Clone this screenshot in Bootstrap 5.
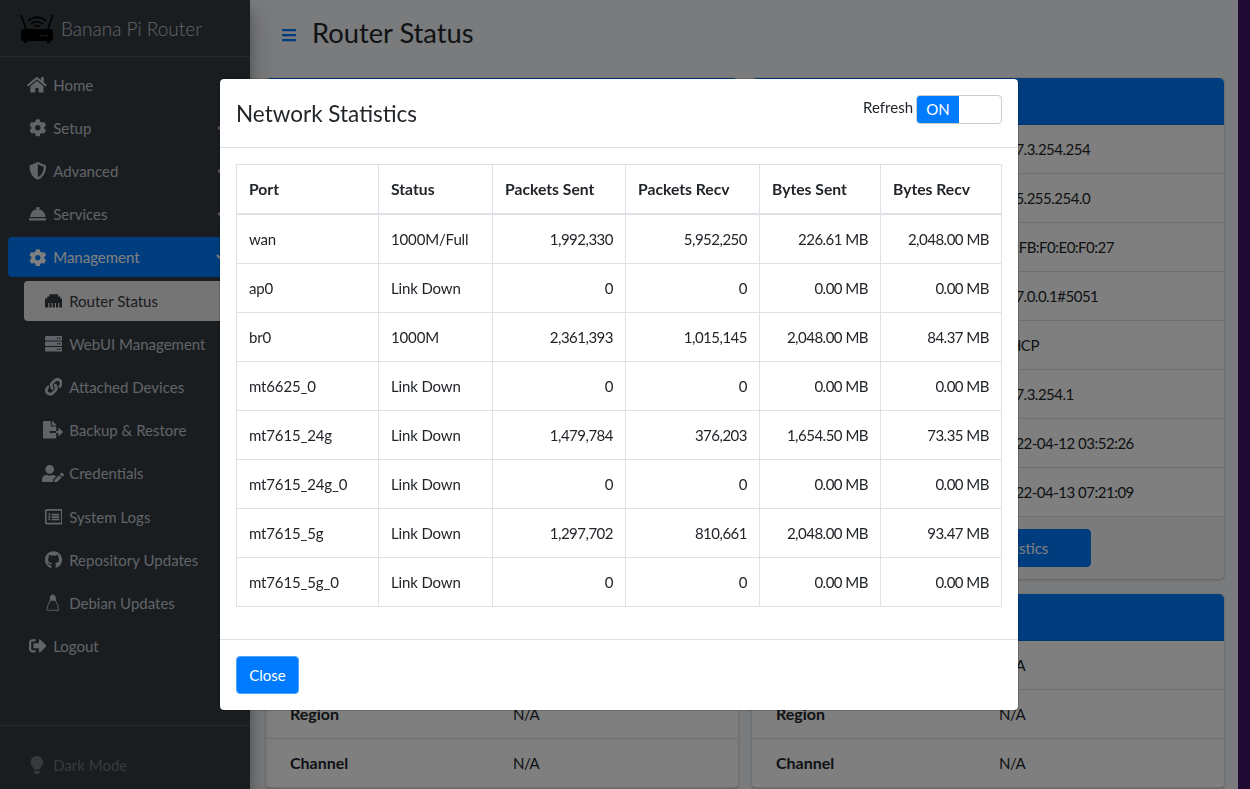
<!DOCTYPE html>
<html lang="en">
<head>
  <meta charset="UTF-8">
  <title>Router Status</title>
  <link href="https://cdn.jsdelivr.net/npm/bootstrap@5.3.3/dist/css/bootstrap.min.css" rel="stylesheet">
  <style>
    html, body { height: 100%; overflow: hidden; }
    body { background: #1f0a33; font-family: "Lato", "Liberation Sans", sans-serif; font-size: 15px; line-height: 24px; color: #212529; }
    .page-wrap { width: 1238px; height: 789px; background: #f4f6f9; overflow: hidden; }
    .modal-backdrop, .modal { width: 1238px; }
    .side-bar { width: 250px; flex: none; background: #343a40; color: #c2c7d0; height: 789px;
      box-shadow: 0 14px 28px rgba(0,0,0,.25), 0 10px 10px rgba(0,0,0,.22); position: relative; z-index: 2; }
    .brand-row { height: 57px; border-bottom: 1px solid #4b545c; padding-left: 20px; }
    .brand-row span { font-size: 19px; font-weight: 300; margin-left: 7px; padding-top: 2px; }
    .side-nav { padding: 7.7px 8px 0; }
    .side-link { display: flex; align-items: center; height: 40px; margin-bottom: 3.2px; padding: 0 16px; border-radius: 4px;
      color: #c2c7d0; text-decoration: none; }
    .side-link .ico { width: 25.6px; margin-right: 3.6px; padding-left: 1px; flex: none; display: flex; justify-content: center; }
    .side-link .ico svg { height: 17.6px; fill: currentColor; }
    .side-link .chev { margin-left: auto; height: 10px; fill: none; stroke: currentColor; stroke-width: 2; }
    .side-link.is-open { background: #007bff; color: #fff; }
    .side-link.is-sub { margin-left: 16px; }
    .side-link.is-current { background: rgba(255,255,255,.9); color: #343a40; }
    .dark-row { position: absolute; left: 0; right: 0; top: 725px; border-top: 1px solid #4b545c; padding: 27px 24px; color: #6c757d; }
    .dark-row svg { height: 18px; width: 25.6px; fill: currentColor; margin-right: 3.6px; }
    .main-area { flex: 1; min-width: 0; }
    .top-head { height: 78px; padding: 14px 0 0 32px; }
    .top-head svg { width: 14px; height: 16px; fill: #007bff; margin: 13px 16px 0 0; }
    .top-head h1 { font-size: 27.3px; font-weight: 400; margin: 0; line-height: 38px; }
    .cards-grid { display: grid; grid-template-columns: 472px 472px; column-gap: 14px; row-gap: 15px; padding-left: 16px; }
    .stat-card { border: 0; border-radius: 4px; box-shadow: 0 0 1px rgba(0,0,0,.25), 0 1px 3px rgba(0,0,0,.2); }
    .stat-card .card-header { height: 47px; background: #007bff; color: #fff; border: 0; border-bottom: 1px solid rgba(0,0,0,.125); padding: 10px 24px; }
    .info-row { display: grid; grid-template-columns: 223px 1fr; height: 49px; padding: 12px 24px; line-height: 24px; border-bottom: 1px solid rgba(0,0,0,.125); }
    .info-row b { font-weight: 700; font-size: 16px; }
    .info-row span { letter-spacing: -.5px; }
    .stat-foot { height: 62px; padding: 12px 0; text-align: center; background: rgba(0,0,0,.03); }
    .stat-foot .btn { width: 205px; font-size: 15px; line-height: 24px; background: #007bff; border-color: #007bff; border-radius: 4px; }
    .modal-dialog { margin-top: 78px; }
    .modal-content { border-radius: 5px; }
    .modal-header { padding: 16px; height: 69px; align-items: flex-start; }
    .modal-title { font-size: 22.5px; line-height: 36px; font-weight: 400; margin-top: 1px; }
    .refresh-toggle { width: 86px; height: 29px; border: 1px solid #ccc; border-radius: 4px; overflow: hidden; margin-left: 3px; }
    .refresh-toggle span { display: block; width: 42px; height: 100%; background: #007bff; color: #fff; text-align: center; line-height: 27px; }
    .modal-footer { justify-content: flex-start; padding: 16px; height: 71px; }
    .modal-footer .btn { margin: 0; width: 63px; padding-left: 0; padding-right: 0; font-size: 15px; line-height: 24px; background: #007bff; border-color: #4da3ff; border-radius: 4px; }
    .net-table { table-layout: fixed; width: 766px; margin-bottom: 16px; color: #212529; font-size: 15px; }
    .net-table th, .net-table td { padding: 12px; line-height: 24px; font-weight: 400; vertical-align: top; }
    .net-table th { font-weight: 700; font-size: 15.7px; border-bottom-width: 2px; }
    .net-table td { letter-spacing: -.15px; }
    .net-table td.text-end { letter-spacing: -.5px; }
    .net-table th:nth-child(1) { width: 142px; }
    .net-table th:nth-child(2) { width: 114px; }
    .net-table th:nth-child(3) { width: 133px; }
    .net-table th:nth-child(4) { width: 134px; }
    .net-table th:nth-child(5) { width: 121px; }
  </style>
</head>
<body>
  <div class="page-wrap d-flex">
    <aside class="side-bar">
      <div class="brand-row d-flex align-items-center">
        <svg width="34" height="32" viewBox="0 0 34 32">
          <path d="M1 3l5 14M33 3l-5 14" stroke="#000" stroke-width="1.6" fill="none"/>
          <path d="M8 9a13 13 0 0 1 18 0M11 12a9 9 0 0 1 12 0M14 15a4.500 4.500 0 0 1 6 0" stroke="#000" stroke-width="1.6" fill="none"/>
          <rect x="1" y="17" width="32" height="12" rx="2.500" fill="#000"/>
          <path d="M4 29h3v2H4zM27 29h3v2h-3z" fill="#000"/>
          <path d="M20 23h1.500v1.500H20zM23 23h1.500v1.500H23zM26 23h1.500v1.500H26z" fill="#444"/>
        </svg>
        <span>Banana Pi Router</span>
      </div>
      <nav class="side-nav">
        <a class="side-link" href="#"><span class="ico"><svg viewBox="0 0 576 512"><path d="M280.37 148.26L96 300.11V464a16 16 0 0 0 16 16l112.06-.29a16 16 0 0 0 15.92-16V368a16 16 0 0 1 16-16h64a16 16 0 0 1 16 16v95.64a16 16 0 0 0 16 16.05L464 480a16 16 0 0 0 16-16V300L295.67 148.26a12.19 12.19 0 0 0-15.3 0zM571.6 251.47L488 182.56V44.05a12 12 0 0 0-12-12h-56a12 12 0 0 0-12 12v72.61L318.47 43a48 48 0 0 0-61 0L4.34 251.47a12 12 0 0 0-1.6 16.9l25.5 31A12 12 0 0 0 45.15 301l235.22-193.74a12.19 12.19 0 0 1 15.3 0L530.9 301a12 12 0 0 0 16.9-1.6l25.5-31a12 12 0 0 0-1.7-16.93z"/></svg></span>Home</a>
        <a class="side-link" href="#"><span class="ico"><svg viewBox="0 0 512 512"><path d="M487.4 315.7l-42.6-24.6c4.3-23.2 4.3-47 0-70.2l42.6-24.6c4.9-2.8 7.1-8.6 5.5-14-11.1-35.6-30-67.8-54.7-94.6-3.8-4.1-10-5.1-14.8-2.3L380.8 110c-17.9-15.4-38.5-27.3-60.8-35.1V25.8c0-5.6-3.9-10.5-9.4-11.7-36.7-8.2-74.3-7.8-109.2 0-5.5 1.2-9.4 6.1-9.4 11.7V75c-22.2 7.9-42.8 19.8-60.8 35.1L88.7 85.5c-4.9-2.8-11-1.9-14.8 2.3-24.7 26.7-43.6 58.9-54.7 94.6-1.7 5.4.6 11.2 5.5 14L67.3 221c-4.3 23.2-4.3 47 0 70.2l-42.6 24.6c-4.9 2.8-7.1 8.6-5.5 14 11.1 35.6 30 67.8 54.7 94.6 3.8 4.1 10 5.1 14.8 2.3l42.6-24.6c17.9 15.4 38.5 27.3 60.8 35.1v49.2c0 5.6 3.9 10.5 9.4 11.7 36.7 8.2 74.3 7.8 109.2 0 5.5-1.2 9.4-6.1 9.4-11.7v-49.2c22.2-7.9 42.8-19.8 60.8-35.1l42.6 24.6c4.9 2.8 11 1.9 14.8-2.3 24.7-26.7 43.6-58.9 54.7-94.6 1.5-5.5-.7-11.3-5.6-14.1zM256 336c-44.1 0-80-35.9-80-80s35.9-80 80-80 80 35.9 80 80-35.9 80-80 80z"/></svg></span>Setup<svg class="chev" viewBox="0 0 10 10"><path d="M7 1L3 5l4 4"/></svg></a>
        <a class="side-link" href="#"><span class="ico"><svg viewBox="0 0 512 512"><path d="M466.5 83.7l-192-80a48.15 48.15 0 0 0-36.9 0l-192 80C27.7 91.1 16 108.6 16 128c0 198.5 114.500 335.700 221.500 380.300 11.800 4.900 25.100 4.900 36.900 0C360.100 472.600 496 349.300 496 128c0-19.400-11.700-36.900-29.500-44.300zM256.100 446.300l-.1-381 175.900 73.300c-3.300 151.400-82.100 261.100-175.800 307.700z"/></svg></span>Advanced<svg class="chev" viewBox="0 0 10 10"><path d="M7 1L3 5l4 4"/></svg></a>
        <a class="side-link" href="#"><span class="ico"><svg viewBox="0 0 512 512"><path d="M288 130.54V112h16c8.84 0 16-7.160 16-16V80c0-8.840-7.160-16-16-16h-96c-8.840 0-16 7.160-16 16v16c0 8.840 7.160 16 16 16h16v18.540C115.490 146.110 32 239.180 32 352h448c0-112.820-83.490-205.890-192-221.460zM496 384H16c-8.840 0-16 7.160-16 16v32c0 8.840 7.160 16 16 16h480c8.840 0 16-7.160 16-16v-32c0-8.840-7.160-16-16-16z"/></svg></span>Services<svg class="chev" viewBox="0 0 10 10"><path d="M7 1L3 5l4 4"/></svg></a>
        <a class="side-link is-open" href="#"><span class="ico"><svg viewBox="0 0 512 512"><path d="M487.4 315.7l-42.6-24.6c4.3-23.2 4.3-47 0-70.2l42.6-24.6c4.9-2.8 7.1-8.6 5.5-14-11.1-35.6-30-67.8-54.7-94.6-3.8-4.1-10-5.1-14.8-2.3L380.8 110c-17.9-15.4-38.5-27.3-60.8-35.1V25.8c0-5.6-3.9-10.5-9.4-11.7-36.7-8.2-74.3-7.8-109.2 0-5.5 1.2-9.4 6.1-9.4 11.7V75c-22.2 7.9-42.8 19.8-60.8 35.1L88.7 85.5c-4.9-2.8-11-1.9-14.8 2.3-24.7 26.7-43.6 58.9-54.7 94.6-1.7 5.4.6 11.2 5.5 14L67.3 221c-4.3 23.2-4.3 47 0 70.2l-42.6 24.6c-4.9 2.8-7.1 8.6-5.5 14 11.1 35.6 30 67.8 54.7 94.6 3.8 4.1 10 5.1 14.8 2.3l42.6-24.6c17.9 15.4 38.5 27.3 60.8 35.1v49.2c0 5.6 3.9 10.5 9.4 11.7 36.7 8.2 74.3 7.8 109.2 0 5.5-1.2 9.4-6.1 9.4-11.7v-49.2c22.2-7.9 42.8-19.8 60.8-35.1l42.6 24.6c4.9 2.8 11 1.9 14.8-2.3 24.7-26.7 43.6-58.9 54.7-94.6 1.5-5.5-.7-11.3-5.6-14.1zM256 336c-44.1 0-80-35.9-80-80s35.9-80 80-80 80 35.9 80 80-35.9 80-80 80z"/></svg></span>Management<svg class="chev" viewBox="0 0 10 10"><path d="M1 3l4 4 4-4"/></svg></a>
        <a class="side-link is-sub is-current" href="#"><span class="ico"><svg viewBox="0 0 512 512"><path d="M496 192h-48v-48c0-8.800-7.200-16-16-16h-48V80c0-8.800-7.200-16-16-16H144c-8.800 0-16 7.200-16 16v48H80c-8.800 0-16 7.200-16 16v48H16c-8.800 0-16 7.200-16 16v224c0 8.800 7.200 16 16 16h80V320h32v128h64V320h32v128h64V320h32v128h64V320h32v128h80c8.800 0 16-7.200 16-16V208c0-8.800-7.200-16-16-16z"/></svg></span>Router Status</a>
        <a class="side-link is-sub" href="#"><span class="ico"><svg viewBox="0 0 512 512"><path fill-rule="evenodd" d="M32 32h448a32 32 0 0 1 32 32v64a32 32 0 0 1-32 32H32a32 32 0 0 1-32-32V64a32 32 0 0 1 32-32zm400 40a24 24 0 1 0 0 48 24 24 0 0 0 0-48zm-64 0a24 24 0 1 0 0 48 24 24 0 0 0 0-48zM32 192h448a32 32 0 0 1 32 32v64a32 32 0 0 1-32 32H32a32 32 0 0 1-32-32v-64a32 32 0 0 1 32-32zm400 40a24 24 0 1 0 0 48 24 24 0 0 0 0-48zm-64 0a24 24 0 1 0 0 48 24 24 0 0 0 0-48zM32 352h448a32 32 0 0 1 32 32v64a32 32 0 0 1-32 32H32a32 32 0 0 1-32-32v-64a32 32 0 0 1 32-32zm400 40a24 24 0 1 0 0 48 24 24 0 0 0 0-48zm-64 0a24 24 0 1 0 0 48 24 24 0 0 0 0-48z"/></svg></span>WebUI Management</a>
        <a class="side-link is-sub" href="#"><span class="ico"><svg viewBox="0 0 512 512"><path d="M326.612 185.391c59.747 59.809 58.927 155.698.36 214.59-.11.12-.24.25-.36.37l-67.2 67.2c-59.27 59.27-155.699 59.262-214.96 0-59.27-59.26-59.27-155.7 0-214.96l37.106-37.106c9.84-9.84 26.786-3.3 27.294 10.606.648 17.722 3.826 35.527 9.69 52.721 1.986 5.822.567 12.262-3.783 16.612l-13.087 13.087c-28.026 28.026-28.905 73.66-1.155 101.96 28.024 28.579 74.086 28.749 102.325.51l67.2-67.19c28.191-28.191 28.073-73.757 0-101.83-3.701-3.694-7.429-6.564-10.341-8.569a16.037 16.037 0 0 1-6.947-12.606c-.396-10.567 3.348-21.456 11.698-29.806l21.054-21.055c5.521-5.521 14.182-6.199 20.584-1.731a152.482 152.482 0 0 1 20.522 17.197zM467.547 44.449c-59.261-59.262-155.69-59.27-214.96 0l-67.2 67.2c-.12.12-.25.25-.36.37-58.566 58.892-59.387 154.781.36 214.59a152.454 152.454 0 0 0 20.521 17.196c6.402 4.468 15.064 3.789 20.584-1.731l21.054-21.055c8.35-8.35 12.094-19.239 11.698-29.806a16.037 16.037 0 0 0-6.947-12.606c-2.912-2.005-6.64-4.875-10.341-8.569-28.073-28.073-28.191-73.639 0-101.83l67.2-67.19c28.239-28.239 74.3-28.069 102.325.51 27.75 28.3 26.872 73.934-1.155 101.96l-13.087 13.087c-4.35 4.35-5.769 10.79-3.783 16.612 5.864 17.194 9.042 34.999 9.69 52.721.509 13.906 17.454 20.446 27.294 10.606l37.106-37.106c59.271-59.259 59.271-155.699.001-214.959z"/></svg></span>Attached Devices</a>
        <a class="side-link is-sub" href="#"><span class="ico"><svg viewBox="0 0 576 512"><path d="M384 121.9c0-6.3-2.5-12.4-7-16.9L279.1 7c-4.5-4.5-10.6-7-17-7H256v128h128zM571 308l-95.7-96.4c-10.1-10.1-27.4-3-27.4 11.3V288h-64v64h64v65.2c0 14.3 17.3 21.4 27.4 11.3L571 332c6.6-6.6 6.6-17.4 0-24zm-379 28v-32c0-8.8 7.2-16 16-16h176V160H248c-13.2 0-24-10.8-24-24V0H24C10.7 0 0 10.7 0 24v464c0 13.3 10.7 24 24 24h336c13.3 0 24-10.7 24-24V352H208c-8.8 0-16-7.2-16-16z"/></svg></span>Backup &amp; Restore</a>
        <a class="side-link is-sub" href="#"><span class="ico"><svg viewBox="0 0 640 512"><path d="M224 256c70.7 0 128-57.3 128-128S294.7 0 224 0 96 57.3 96 128s57.3 128 128 128zm89.6 32h-16.7c-22.2 10.2-46.9 16-72.9 16s-50.6-5.8-72.9-16h-16.7C60.2 288 0 348.2 0 422.4V464c0 26.5 21.5 48 48 48h274.9c-2.4-6.8-3.4-14-2.6-21.3l6.8-60.9 1.2-11.1 7.9-7.9 77.3-77.3c-24.5-27.7-60-45.5-99.9-45.5zm45.3 145.3l-6.8 61c-1.1 10.2 7.5 18.8 17.6 17.6l60.9-6.8 137.9-137.9-71.7-71.7-137.9 137.8zM633 268.9L595.1 231c-9.3-9.3-24.5-9.3-33.8 0l-37.8 37.8-4.1 4.1 71.8 71.7 41.8-41.8c9.3-9.4 9.3-24.5 0-33.9z"/></svg></span>Credentials</a>
        <a class="side-link is-sub" href="#"><span class="ico"><svg viewBox="0 0 512 512"><path fill-rule="evenodd" d="M464 32H48C21.490 32 0 53.490 0 80v352c0 26.510 21.490 48 48 48h416c26.510 0 48-21.490 48-48V80c0-26.510-21.490-48-48-48zm-6 400H54a6 6 0 0 1-6-6V86a6 6 0 0 1 6-6h404a6 6 0 0 1 6 6v340a6 6 0 0 1-6 6zM128 152a32 32 0 1 0 0 64 32 32 0 0 0 0-64zm0 72a32 32 0 1 0 0 64 32 32 0 0 0 0-64zm0 72a32 32 0 1 0 0 64 32 32 0 0 0 0-64zm76-128h200a12 12 0 0 1 12 12v24a12 12 0 0 1-12 12H204a12 12 0 0 1-12-12v-24a12 12 0 0 1 12-12zm0 72h200a12 12 0 0 1 12 12v24a12 12 0 0 1-12 12H204a12 12 0 0 1-12-12v-24a12 12 0 0 1 12-12zm0 72h200a12 12 0 0 1 12 12v24a12 12 0 0 1-12 12H204a12 12 0 0 1-12-12v-24a12 12 0 0 1 12-12z"/></svg></span>System Logs</a>
        <a class="side-link is-sub" href="#"><span class="ico"><svg viewBox="0 0 496 512"><path d="M244.8 8C106.1 8 0 113.3 0 252c0 110.9 69.8 205.8 169.5 239.2 12.8 2.3 17.3-5.6 17.3-12.1 0-6.2-.3-40.4-.3-61.4 0 0-70 15-84.7-29.8 0 0-11.4-29.1-27.8-36.6 0 0-22.9-15.7 1.6-15.4 0 0 24.9 2 38.6 25.8 21.9 38.6 58.6 27.5 72.9 20.9 2.3-16 8.8-27.1 16-33.7-55.9-6.2-112.3-14.3-112.3-110.5 0-27.5 7.6-41.3 23.6-58.9-2.6-6.5-11.1-33.3 2.6-67.9 20.9-6.5 69 27 69 27 20-5.6 41.5-8.5 62.8-8.5s42.8 2.9 62.8 8.5c0 0 48.1-33.6 69-27 13.7 34.7 5.2 61.4 2.6 67.9 16 17.7 25.8 31.5 25.8 58.9 0 96.5-58.9 104.2-114.8 110.5 9.2 7.9 17 22.9 17 46.4 0 33.7-.3 75.4-.3 83.6 0 6.5 4.6 14.4 17.3 12.1C428.2 457.8 496 362.9 496 252 496 113.3 383.500 8 244.800 8z"/></svg></span>Repository Updates</a>
        <a class="side-link is-sub" href="#"><span class="ico"><svg viewBox="0 0 16 18"><path d="M8 1c-2 0-2.500 1.500-2.500 3.500 0 1-.2 2-.5 2.500h6c-.3-.5-.5-1.500-.5-2.500C10.500 2.500 10 1 8 1z"/><path d="M8 1c-2 0-2.500 1.500-2.500 3.500S5 7.500 4 9.500 2 13 3 15l-1.500 1c1 1 3 1.500 4.500.500h4c1.500 1 3.500.500 4.500-.500L13 15c1-2 0-3.500-1-5.500s-1.500-3-1.500-5S10 1 8 1z" fill="none" stroke="currentColor"/></svg></span>Debian Updates</a>
        <a class="side-link" href="#"><span class="ico"><svg viewBox="0 0 512 512"><path d="M497 273L329 441c-15 15-41 4.500-41-17v-96H152c-13.300 0-24-10.700-24-24v-96c0-13.300 10.700-24 24-24h136V88c0-21.400 25.900-32 41-17l168 168c9.300 9.400 9.300 24.600 0 34zM192 436v-40c0-6.600-5.400-12-12-12H96c-17.700 0-32-14.300-32-32V160c0-17.700 14.300-32 32-32h84c6.600 0 12-5.400 12-12V76c0-6.600-5.400-12-12-12H96c-53 0-96 43-96 96v192c0 53 43 96 96 96h84c6.600 0 12-5.400 12-12z"/></svg></span>Logout</a>
      </nav>
      <div class="dark-row d-flex align-items-center"><svg viewBox="0 0 352 512"><path d="M96.060 454.350c.01 6.290 1.870 12.450 5.360 17.690l17.090 25.690a31.990 31.990 0 0 0 26.640 14.280h61.710a31.990 31.990 0 0 0 26.640-14.280l17.090-25.690a31.989 31.989 0 0 0 5.360-17.690l.04-38.350H96.010l.05 38.350zM0 176c0 44.370 16.450 84.850 43.560 115.780 16.520 18.850 42.360 58.230 52.210 91.450.04.26.07.52.11.78h160.240c.04-.26.07-.51.11-.78 9.850-33.220 35.690-72.600 52.210-91.450C335.550 260.850 352 220.370 352 176 352 78.610 272.910-.3 175.450 0 73.440.31 0 82.970 0 176z"/></svg>Dark Mode</div>
    </aside>

    <main class="main-area">
      <div class="top-head d-flex align-items-start">
        <svg viewBox="0 0 448 512"><path d="M16 132h416c8.837 0 16-7.163 16-16V76c0-8.837-7.163-16-16-16H16C7.163 60 0 67.163 0 76v40c0 8.837 7.163 16 16 16zm0 160h416c8.837 0 16-7.163 16-16v-40c0-8.837-7.163-16-16-16H16c-8.837 0-16 7.163-16 16v40c0 8.837 7.163 16 16 16zm0 160h416c8.837 0 16-7.163 16-16v-40c0-8.837-7.163-16-16-16H16c-8.837 0-16 7.163-16 16v40c0 8.837 7.163 16 16 16z"/></svg>
        <h1>Router Status</h1>
      </div>
      <div class="cards-grid">
        <div class="card stat-card">
          <div class="card-header">WAN Interface</div>
          <div class="info-row"><b>IP Address</b><span>192.168.1.1</span></div>
          <div class="info-row"><b>IP Subnet Mask</b><span>255.255.255.0</span></div>
          <div class="info-row"><b>MAC Address</b><span>02:FB:F0:E0:F0:26</span></div>
          <div class="info-row"><b>DNS Server</b><span>127.0.0.1#5051</span></div>
          <div class="info-row"><b>DHCP Server</b><span>Enabled</span></div>
          <div class="info-row"><b>DHCP Range</b><span>192.168.1.100</span></div>
          <div class="info-row"><b>Start Time</b><span>2022-04-12 03:52:26</span></div>
          <div class="info-row"><b>Current Time</b><span>2022-04-13 07:21:09</span></div>
          <div class="stat-foot"><button class="btn btn-primary" type="button">Attached Devices</button></div>
        </div>
        <div class="card stat-card">
          <div class="card-header">Internet Port</div>
          <div class="info-row"><b>IP Address</b><span>107.3.254.254</span></div>
          <div class="info-row"><b>IP Subnet Mask</b><span>255.255.254.0</span></div>
          <div class="info-row"><b>MAC Address</b><span>02:FB:F0:E0:F0:27</span></div>
          <div class="info-row"><b>DNS Server</b><span>127.0.0.1#5051</span></div>
          <div class="info-row"><b>Connection</b><span>DHCP</span></div>
          <div class="info-row"><b>Gateway</b><span>107.3.254.1</span></div>
          <div class="info-row"><b>Lease Start</b><span>2022-04-12 03:52:26</span></div>
          <div class="info-row"><b>Lease End</b><span>2022-04-13 07:21:09</span></div>
          <div class="stat-foot"><button class="btn btn-primary" type="button">Network Statistics</button></div>
        </div>
        <div class="card stat-card">
          <div class="card-header">2.4 GHz Wireless</div>
          <div class="info-row"><b>SSID</b><span>N/A</span></div>
          <div class="info-row"><b>Region</b><span>N/A</span></div>
          <div class="info-row"><b>Channel</b><span>N/A</span></div>
        </div>
        <div class="card stat-card">
          <div class="card-header">5 GHz Wireless</div>
          <div class="info-row"><b>SSID</b><span>N/A</span></div>
          <div class="info-row"><b>Region</b><span>N/A</span></div>
          <div class="info-row"><b>Channel</b><span>N/A</span></div>
        </div>
      </div>
    </main>
  </div>

  <div class="modal-backdrop show"></div>
  <div class="modal d-block" tabindex="-1">
    <div class="modal-dialog modal-lg">
      <div class="modal-content">
        <div class="modal-header">
          <h4 class="modal-title">Network Statistics</h4>
          <div class="ms-auto d-flex">
            <span>Refresh</span>
            <div class="refresh-toggle"><span>ON</span></div>
          </div>
        </div>
        <div class="modal-body">
          <table class="table table-bordered net-table">
            <thead>
              <tr><th>Port</th><th>Status</th><th>Packets Sent</th><th>Packets Recv</th><th>Bytes Sent</th><th>Bytes Recv</th></tr>
            </thead>
            <tbody>
              <tr><td>wan</td><td>1000M/Full</td><td class="text-end">1,992,330</td><td class="text-end">5,952,250</td><td class="text-end">226.61 MB</td><td class="text-end">2,048.00 MB</td></tr>
              <tr><td>ap0</td><td>Link Down</td><td class="text-end">0</td><td class="text-end">0</td><td class="text-end">0.00 MB</td><td class="text-end">0.00 MB</td></tr>
              <tr><td>br0</td><td>1000M</td><td class="text-end">2,361,393</td><td class="text-end">1,015,145</td><td class="text-end">2,048.00 MB</td><td class="text-end">84.37 MB</td></tr>
              <tr><td>mt6625_0</td><td>Link Down</td><td class="text-end">0</td><td class="text-end">0</td><td class="text-end">0.00 MB</td><td class="text-end">0.00 MB</td></tr>
              <tr><td>mt7615_24g</td><td>Link Down</td><td class="text-end">1,479,784</td><td class="text-end">376,203</td><td class="text-end">1,654.50 MB</td><td class="text-end">73.35 MB</td></tr>
              <tr><td>mt7615_24g_0</td><td>Link Down</td><td class="text-end">0</td><td class="text-end">0</td><td class="text-end">0.00 MB</td><td class="text-end">0.00 MB</td></tr>
              <tr><td>mt7615_5g</td><td>Link Down</td><td class="text-end">1,297,702</td><td class="text-end">810,661</td><td class="text-end">2,048.00 MB</td><td class="text-end">93.47 MB</td></tr>
              <tr><td>mt7615_5g_0</td><td>Link Down</td><td class="text-end">0</td><td class="text-end">0</td><td class="text-end">0.00 MB</td><td class="text-end">0.00 MB</td></tr>
            </tbody>
          </table>
        </div>
        <div class="modal-footer">
          <button type="button" class="btn btn-primary">Close</button>
        </div>
      </div>
    </div>
  </div>

  <script src="https://cdn.jsdelivr.net/npm/bootstrap@5.3.3/dist/js/bootstrap.bundle.min.js"></script>
</body>
</html>
